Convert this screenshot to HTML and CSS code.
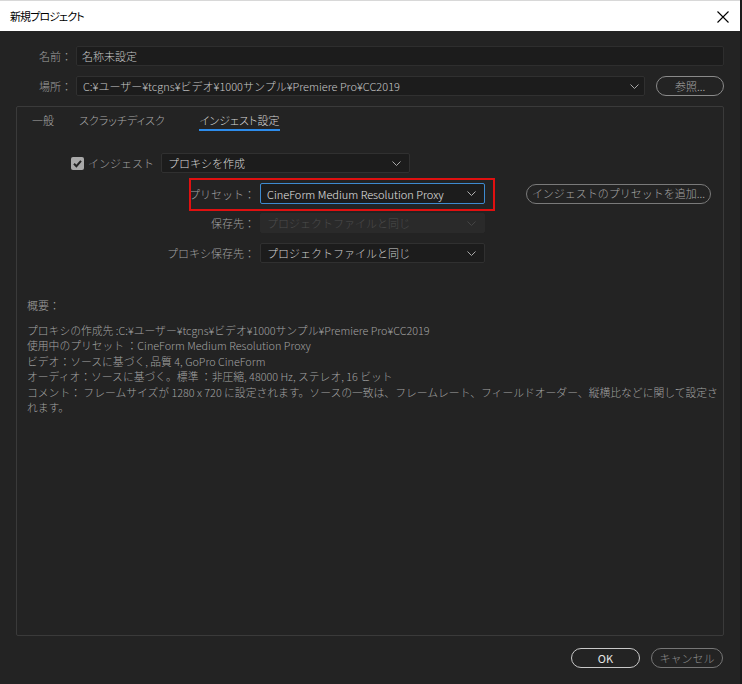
FILE: index.html
```html
<!DOCTYPE html>
<html lang="ja">
<head>
<meta charset="utf-8">
<title>新規プロジェクト</title>
<link rel="stylesheet" href="styles.css">
</head>
<body>
<div class="window">
  <div class="titlebar">
    <span class="title">新規プロジェクト</span>
    <svg class="close" width="12" height="12" viewBox="0 0 12 12"><path d="M0.5 0.5L11.5 11.5M11.5 0.5L0.5 11.5" stroke="#000" stroke-width="1.1" fill="none"/></svg>
  </div>
  <div class="content">
    <div class="field-row">
      <span class="label top-label">名前：</span>
      <div class="textbox">名称未設定</div>
    </div>
    <div class="field-row">
      <span class="label top-label">場所：</span>
      <div class="select wide">
        <span>C:¥ユーザー¥tcgns¥ビデオ¥1000サンプル¥Premiere Pro¥CC2019</span>
        <svg class="chev" width="9" height="5" viewBox="0 0 9 5"><path d="M0.5 0.5L4.5 4.5L8.5 0.5" stroke="#a8a8a8" fill="none"/></svg>
      </div>
      <button class="pill browse">参照...</button>
    </div>
    <div class="panel">
      <div class="tabs">
        <span class="tab">一般</span>
        <span class="tab">スクラッチディスク</span>
        <span class="tab active">インジェスト設定</span>
      </div>
      <div class="ingest-row">
        <span class="checkbox"><svg width="13" height="13" viewBox="0 0 13 13"><path d="M3 6.8L5.4 9.2L10 3.8" stroke="#232323" stroke-width="2" fill="none"/></svg></span>
        <span class="check-label">インジェスト</span>
        <div class="select ingest-select">
          <span>プロキシを作成</span>
          <svg class="chev" width="9" height="5" viewBox="0 0 9 5"><path d="M0.5 0.5L4.5 4.5L8.5 0.5" stroke="#a8a8a8" fill="none"/></svg>
        </div>
      </div>
      <div class="grid">
        <div class="grid-row preset-row">
          <span class="label">プリセット：</span>
          <div class="select focused">
            <span>CineForm Medium Resolution Proxy</span>
            <svg class="chev" width="9" height="5" viewBox="0 0 9 5"><path d="M0.5 0.5L4.5 4.5L8.5 0.5" stroke="#b0b0b0" fill="none"/></svg>
          </div>
          <button class="pill add">インジェストのプリセットを追加...</button>
          <span class="highlight"></span>
        </div>
        <div class="grid-row">
          <span class="label">保存先：</span>
          <div class="select disabled">
            <span>プロジェクトファイルと同じ</span>
            <svg class="chev" width="9" height="5" viewBox="0 0 9 5"><path d="M0.5 0.5L4.5 4.5L8.5 0.5" stroke="#444" fill="none"/></svg>
          </div>
        </div>
        <div class="grid-row">
          <span class="label">プロキシ保存先：</span>
          <div class="select">
            <span>プロジェクトファイルと同じ</span>
            <svg class="chev" width="9" height="5" viewBox="0 0 9 5"><path d="M0.5 0.5L4.5 4.5L8.5 0.5" stroke="#a8a8a8" fill="none"/></svg>
          </div>
        </div>
      </div>
      <div class="summary">
        <p class="summary-title">概要：</p>
        <p class="summary-body">プロキシの作成先 :C:¥ユーザー¥tcgns¥ビデオ¥1000サンプル¥Premiere Pro¥CC2019<br>使用中のプリセット ：CineForm Medium Resolution Proxy<br>ビデオ：ソースに基づく, 品質 4, GoPro CineForm<br>オーディオ：ソースに基づく。標準 ：非圧縮, 48000 Hz, ステレオ, 16 ビット<br>コメント： フレームサイズが 1280 x 720 に設定されます。ソースの一致は、フレームレート、フィールドオーダー、縦横比などに関して設定されます。</p>
      </div>
    </div>
    <div class="footer">
      <button class="pill ok">OK</button>
      <button class="pill cancel">キャンセル</button>
    </div>
  </div>
</div>
</body>
</html>
```
FILE: styles.css
```css
* { box-sizing: border-box; }
html, body { margin: 0; padding: 0; }
body {
  background: #232323;
  font-family: "Noto Sans CJK JP", "Noto Sans", sans-serif;
  font-size: 11px;
  font-weight: 300;
  color: #a8a8a8;
}
.window {
  width: 742px;
  height: 684px;
  display: flex;
  flex-direction: column;
  border-right: 2px solid #1a1a1a;
}
.titlebar {
  height: 31px;
  background: #ffffff;
  border-top: 1px solid #d8d8d8;
  display: flex;
  align-items: center;
  justify-content: space-between;
  padding: 0 11px 0 10px;
  flex: none;
}
.title {
  color: #000;
  font-size: 11px;
  font-weight: 400;
  font-feature-settings: "palt";
  letter-spacing: -0.9px;
}
.close { display: block; margin-top: 1px; }
.content {
  flex: 1;
  display: flex;
  flex-direction: column;
  padding: 15px 16px 16px 16px;
}
.field-row {
  display: flex;
  align-items: center;
  height: 20px;
  margin-bottom: 10px;
}
.label {
  color: #a0a0a0;
  white-space: nowrap;
}
.top-label {
  width: 56px;
  text-align: right;
  margin-right: 4px;
}
.textbox {
  flex: 1;
  height: 20px;
  background: #1c1c1c;
  border: 1px solid #2e2e2e;
  border-radius: 2px;
  color: #c8c8c8;
  padding: 0 5px;
  line-height: 18px;
}
.select {
  height: 20px;
  background: #1c1c1c;
  border: 1px solid #303030;
  border-radius: 2px;
  color: #d0d0d0;
  padding: 0 8px 0 6px;
  display: flex;
  align-items: center;
  justify-content: space-between;
  white-space: nowrap;
}
.select span { line-height: 18px; }
.chev { flex: none; display: block; }
.select.wide { width: 570px; padding-right: 5px; color: #c8c8c8; }
.pill {
  font-family: inherit;
  font-size: 11px;
  font-weight: 300;
  background: transparent;
  border: 1px solid #8a8a8a;
  border-radius: 10px;
  color: #a8a8a8;
  height: 20px;
  padding: 0;
  line-height: 17px;
  cursor: default;
}
.browse { width: 68px; margin-left: 11px; }
.panel {
  flex: 1;
  border: 1px solid #3a3a3a;
  border-radius: 2px;
  display: flex;
  flex-direction: column;
}
.tabs {
  display: flex;
  gap: 28px;
  padding: 5px 0 0 14px;
  height: 25px;
  font-feature-settings: "palt";
}
.tab {
  color: #a8a8a8;
  font-size: 11px;
  line-height: 16px;
  padding: 0 1px;
  height: 19px;
}
.tab:first-child { margin-right: -5px; }
.tab:nth-child(2) { margin-right: 5px; }
.tab.active {
  color: #d6d6d6;
  border-bottom: 2px solid #2d8ceb;
}
.ingest-row {
  display: flex;
  align-items: center;
  height: 20px;
  margin-top: 21px;
  padding-left: 54px;
}
.checkbox {
  width: 13px;
  height: 13px;
  border-radius: 2px;
  background: #a9a9a9;
  display: block;
  flex: none;
}
.checkbox svg { display: block; }
.check-label { width: 77px; padding-left: 4px; color: #a0a0a0; }
.ingest-select {
  width: 249px;
  color: #d8d8d8;
}
.grid { display: flex; flex-direction: column; gap: 10px; margin-top: 10px; }
.grid-row {
  display: grid;
  grid-template-columns: 238px 225px auto;
  column-gap: 5px;
  align-items: center;
  height: 20px;
  position: relative;
}
.grid-row .label { text-align: right; }
.select.focused {
  border-color: #3d8ad0;
  height: 21px;
  color: #e4e4e4;
}
.select.disabled {
  background: #2a2a2a;
  border-color: #2a2a2a;
  color: #4c4c4c;
}
.add {
  width: 185px;
  margin-left: 36px;
  color: #a4a4a4;
  border-color: #7a7a7a;
}
.highlight {
  position: absolute;
  left: 172px;
  top: -5px;
  width: 306px;
  height: 33px;
  border: 2px solid #e01010;
  pointer-events: none;
}
.summary {
  padding-left: 10px;
  margin-top: 35px;
}
.summary p { margin: 0; }
.summary-title { line-height: 15px; color: #a0a0a0; }
.summary-body {
  margin-top: 10px !important;
  font-size: 10.8px;
  line-height: 15.4px;
  color: #a2a2a2;
  width: 692px;
}
.footer {
  display: flex;
  justify-content: flex-end;
  gap: 11px;
  margin-top: 12px;
  padding-right: 1px;
}
.ok {
  width: 69px;
  border-color: #c8c8c8;
  color: #e6e6e6;
  font-weight: 400;
}
.cancel {
  width: 72px;
  border-color: #767676;
  color: #8e8e8e;
}
```
